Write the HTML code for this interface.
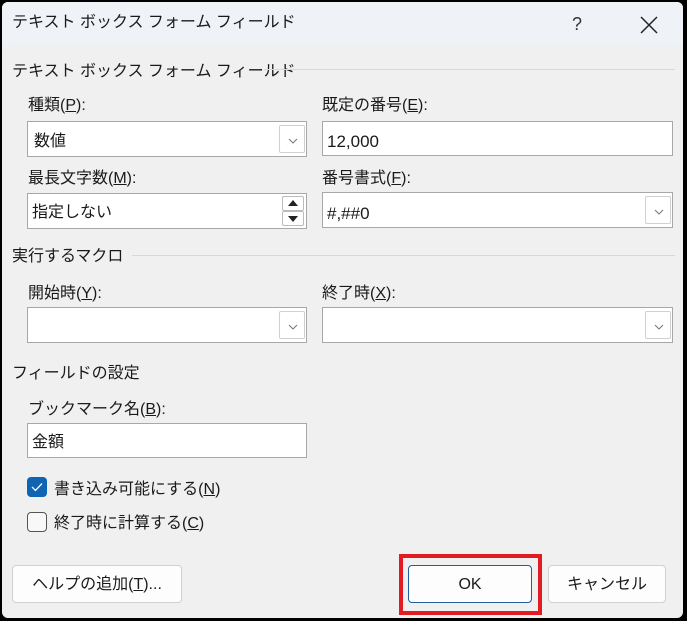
<!DOCTYPE html>
<html><head><meta charset="utf-8"><style>
*{margin:0;padding:0;box-sizing:border-box}
body{width:687px;height:621px;background:#000;position:relative;overflow:hidden;font-family:"Liberation Sans","Noto Sans CJK JP",sans-serif;font-size:16px;color:#1a1a1a}
.win{position:absolute;left:2px;top:2px;width:681px;height:616px;background:#f0f0f0;border-radius:6px;overflow:hidden}
.title{position:absolute;left:0;top:0;width:100%;height:43px;background:#eff3f7}
.a{position:absolute;white-space:nowrap;line-height:1;margin-top:2px}
.box{position:absolute;background:#fff;border:1px solid #a8a8a8}
.dd{position:absolute;right:1px;top:3px;width:26px;bottom:3px;border:1px solid #d0d0d0;border-radius:2px;background:#fff}
.dd svg{position:absolute;left:8px;top:12px}
.line{position:absolute;height:1px;background:#d8d8d8}
.btn{position:absolute;background:#fdfdfd;border:1px solid #d0d0d0;border-radius:4px;text-align:center;line-height:38px}
u{text-decoration:underline}
</style></head><body>
<div class="win">
<div class="title"></div>
<div class="a" style="left:10px;top:11px;font-size:16px">テキスト ボックス フォーム フィールド</div>
<div class="a" style="left:570px;top:11px;font-size:18px;color:#333">?</div>
<svg class="a" style="left:637px;top:11px" width="20" height="20"><path d="M2 2L18 18M18 2L2 18" stroke="#222" stroke-width="1.5"/></svg>

<div class="a" style="left:10px;top:60px">テキスト ボックス フォーム フィールド</div>
<div class="line" style="left:262px;top:67px;width:411px"></div>
<div class="a" style="left:26px;top:94px">種類(<u>P</u>):</div>
<div class="box" style="left:25px;top:119px;width:280px;height:36px"><div class="a" style="left:6px;top:10px">数値</div><div class="dd"><svg width="10" height="6"><path d="M1 1L5 5L9 1" fill="none" stroke="#777"/></svg></div></div>
<div class="a" style="left:320px;top:94px">既定の番号(<u>E</u>):</div>
<div class="box" style="left:320px;top:119px;width:351px;height:35px"><div class="a" style="left:4px;top:9px;font-size:17px">12,000</div></div>
<div class="a" style="left:26px;top:167px">最長文字数(<u>M</u>):</div>
<div class="box" style="left:25px;top:191px;width:280px;height:36px"><div class="a" style="left:4px;top:9px">指定しない</div>
<div style="position:absolute;right:2px;top:2px;width:22px;height:15px;border:1px solid #bbb;border-radius:2px"><svg style="position:absolute;left:5px;top:3px" width="10" height="7"><path d="M0 6L5 0L10 6Z" fill="#222"/></svg></div>
<div style="position:absolute;right:2px;top:17px;width:22px;height:15px;border:1px solid #bbb;border-radius:2px"><svg style="position:absolute;left:5px;top:4px" width="10" height="7"><path d="M0 0L5 6L10 0Z" fill="#222"/></svg></div></div>
<div class="a" style="left:320px;top:167px">番号書式(<u>F</u>):</div>
<div class="box" style="left:320px;top:190px;width:351px;height:36px"><div class="a" style="left:4px;top:10px;font-size:17px">#,##0</div><div class="dd"><svg width="10" height="6"><path d="M1 1L5 5L9 1" fill="none" stroke="#777"/></svg></div></div>

<div class="a" style="left:10px;top:245px">実行するマクロ</div>
<div class="line" style="left:130px;top:253px;width:543px"></div>
<div class="a" style="left:26px;top:282px">開始時(<u>Y</u>):</div>
<div class="box" style="left:25px;top:305px;width:280px;height:36px"><div class="dd"><svg width="10" height="6"><path d="M1 1L5 5L9 1" fill="none" stroke="#777"/></svg></div></div>
<div class="a" style="left:320px;top:282px">終了時(<u>X</u>):</div>
<div class="box" style="left:320px;top:305px;width:351px;height:36px"><div class="dd"><svg width="10" height="6"><path d="M1 1L5 5L9 1" fill="none" stroke="#777"/></svg></div></div>

<div class="a" style="left:10px;top:362px">フィールドの設定</div>
<div class="a" style="left:26px;top:398px">ブックマーク名(<u>B</u>):</div>
<div class="box" style="left:25px;top:421px;width:280px;height:35px"><div class="a" style="left:4px;top:9px">金額</div></div>

<div style="position:absolute;left:25px;top:475px;width:20px;height:20px;background:#0f64b4;border-radius:4px"><svg style="position:absolute;left:4px;top:5px" width="12" height="10"><path d="M1 5L4.5 8.5L11 1.5" fill="none" stroke="#fff" stroke-width="1.3"/></svg></div>
<div class="a" style="left:52px;top:478px">書き込み可能にする(<u>N</u>)</div>
<div style="position:absolute;left:25px;top:510px;width:20px;height:20px;border:1px solid #555;border-radius:4px;background:#f8f8f8"></div>
<div class="a" style="left:52px;top:512px">終了時に計算する(<u>C</u>)</div>

<div class="btn" style="left:10px;top:563px;width:170px;height:38px">ヘルプの追加(<u>T</u>)...</div>
<div style="position:absolute;left:397px;top:552px;width:143px;height:61px;border:4px solid #e31c23"></div>
<div class="btn" style="left:406px;top:563px;width:124px;height:38px;border:1px solid #1f5f9f">OK</div>
<div class="btn" style="left:546px;top:563px;width:118px;height:38px">キャンセル</div>
</div>
</body></html>
